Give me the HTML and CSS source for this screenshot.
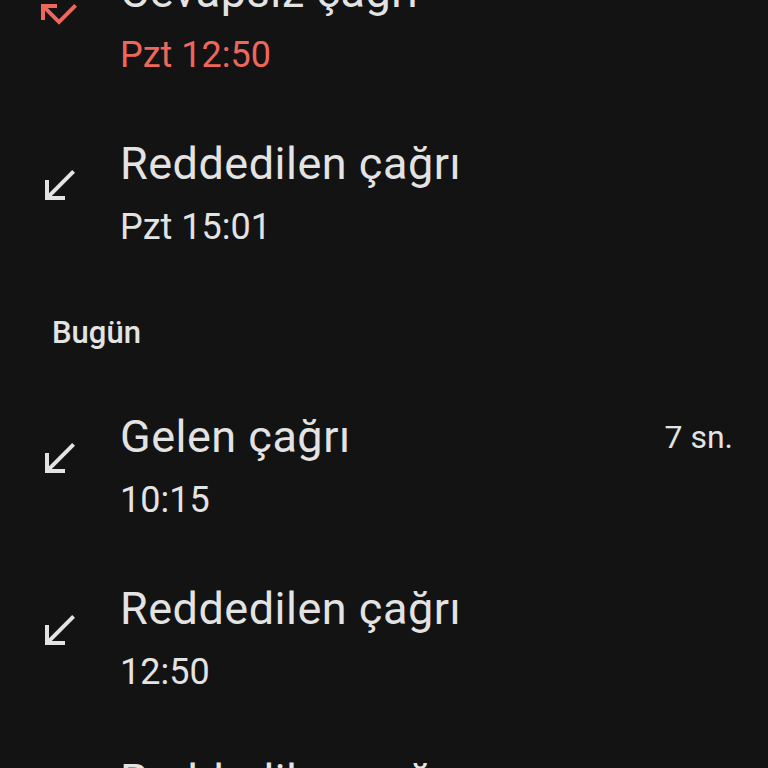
FILE: index.html
```html
<!DOCTYPE html>
<html lang="tr">
<head>
<meta charset="utf-8">
<link rel="stylesheet" href="styles.css">
</head>
<body>
<div class="list">
  <div class="row">
    <div class="icon">
      <svg class="ico missed" viewBox="0 0 24 24"><path d="M19.59 7L12 14.59 6.41 9H11V7H3v8h2v-4.59l7 7 9-9z"/></svg>
    </div>
    <div class="texts">
      <div class="title">Cevapsız çağrı</div>
      <div class="sub red">Pzt 12:50</div>
    </div>
  </div>
  <div class="row">
    <div class="icon">
      <svg class="ico" viewBox="0 0 24 24"><path d="M20 5.41L18.59 4 7 15.59V9H5v10h10v-2H8.41z"/></svg>
    </div>
    <div class="texts">
      <div class="title">Reddedilen çağrı</div>
      <div class="sub">Pzt 15:01</div>
    </div>
  </div>
  <div class="header">Bugün</div>
  <div class="row">
    <div class="icon">
      <svg class="ico" viewBox="0 0 24 24"><path d="M20 5.41L18.59 4 7 15.59V9H5v10h10v-2H8.41z"/></svg>
    </div>
    <div class="texts">
      <div class="title">Gelen çağrı</div>
      <div class="sub">10:15</div>
    </div>
    <div class="dur">7 sn.</div>
  </div>
  <div class="row">
    <div class="icon">
      <svg class="ico" viewBox="0 0 24 24"><path d="M20 5.41L18.59 4 7 15.59V9H5v10h10v-2H8.41z"/></svg>
    </div>
    <div class="texts">
      <div class="title">Reddedilen çağrı</div>
      <div class="sub">12:50</div>
    </div>
  </div>
  <div class="row">
    <div class="icon">
      <svg class="ico" viewBox="0 0 24 24"><path d="M20 5.41L18.59 4 7 15.59V9H5v10h10v-2H8.41z"/></svg>
    </div>
    <div class="texts">
      <div class="title">Reddedilen çağrı</div>
      <div class="sub">Pzt 15:01</div>
    </div>
  </div>
</div>
</body>
</html>
```
FILE: styles.css
```css
html, body {
  margin: 0;
  padding: 0;
  background: #131313;
  height: 768px;
  overflow: hidden;
}
body {
  font-family: Roboto, "Noto Sans", sans-serif;
  color: #e3e3e3;
}
.list {
  margin-top: -63px;
  display: flex;
  flex-direction: column;
}
.row {
  display: flex;
  align-items: flex-start;
  height: 172px;
  box-sizing: border-box;
  padding: 30.5px 35px 0 0;
}
.icon {
  width: 120px;
  flex: none;
  position: relative;
  height: 111px;
}
.ico {
  position: absolute;
  left: 35px;
  top: 22px;
  width: 48px;
  height: 48px;
  fill: #e3e3e3;
}
.ico.missed {
  fill: #ee675c;
}
.texts {
  flex: 1;
  display: flex;
  flex-direction: column;
  gap: 15px;
}
.title {
  font-size: 45px;
  line-height: 48px;
  letter-spacing: 0.5px;
  white-space: nowrap;
}
.sub {
  font-size: 36px;
  line-height: 48px;
}
.sub.red {
  color: #ee675c;
}
.dur {
  font-size: 32px;
  line-height: 48px;
  flex: none;
}
.header {
  box-sizing: border-box;
  height: 101.5px;
  padding: 32px 0 0 52px;
  font-size: 31px;
  line-height: 40px;
  font-weight: 500;
}
```
